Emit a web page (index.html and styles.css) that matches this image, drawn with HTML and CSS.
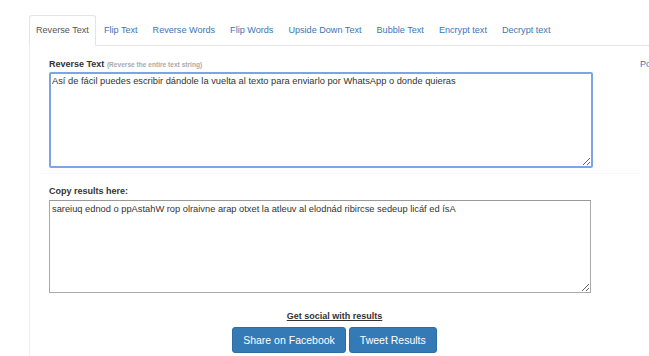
FILE: index.html
```html
<!DOCTYPE html>
<html lang="es">
<head>
  <meta charset="UTF-8">
  <meta name="viewport" content="width=device-width, initial-scale=1.0">
  <title>Reverse Text</title>
  <link rel="stylesheet" href="styles.css">
</head>
<body>
  <div class="page">
    <div class="main">
      <ul class="tabs">
        <li class="tab active"><a href="#">Reverse Text</a></li>
        <li class="tab"><a href="#">Flip Text</a></li>
        <li class="tab"><a href="#">Reverse Words</a></li>
        <li class="tab"><a href="#">Flip Words</a></li>
        <li class="tab"><a href="#">Upside Down Text</a></li>
        <li class="tab"><a href="#">Bubble Text</a></li>
        <li class="tab"><a href="#">Encrypt text</a></li>
        <li class="tab"><a href="#">Decrypt text</a></li>
      </ul>

      <div class="tab-content">
        <div class="form-group">
          <label for="source">Reverse Text <small>(Reverse the entire text string)</small></label>
          <textarea id="source" class="source">Así de fácil puedes escribir dándole la vuelta al texto para enviarlo por WhatsApp o donde quieras</textarea>
        </div>

        <div class="form-group">
          <label for="result">Copy results here:</label>
          <textarea id="result" class="result">sareiuq ednod o ppAstahW rop olraivne arap otxet la atleuv al elodnád ribircse sedeup licáf ed ísA</textarea>
        </div>

        <div class="social">
          <p class="social-title">Get social with results</p>
          <div class="social-buttons">
            <button type="button">Share on Facebook</button>
            <button type="button">Tweet Results</button>
          </div>
        </div>
      </div>
    </div>

    <div class="sidebar">
      <a href="#">Po</a>
    </div>
  </div>
</body>
</html>
```

FILE: styles.css
```css
body {
  margin: 0;
  font-family: "Liberation Sans", Arial, sans-serif;
  color: #333;
  overflow: hidden;
}
.page {
  display: flex;
  padding-top: 15px;
  padding-left: 29px;
}
.main {
  width: 611px;
  flex-shrink: 0;
}
.tabs {
  display: flex;
  list-style: none;
  margin: 0;
  padding: 0;
  height: 30px;
  border-bottom: 1px solid #e4e4e4;
  width: 620px;
}
.tab {
  margin-right: 1px;
}
.tab a {
  display: block;
  height: 30px;
  line-height: 29px;
  padding: 0 6px;
  box-sizing: border-box;
  border: 1px solid transparent;
  border-radius: 3px 3px 0 0;
  font-size: 9.1px;
  color: #3a76b4;
  text-decoration: none;
}
.tab.active a {
  color: #555;
  background-color: #fff;
  border-color: #e4e4e4;
  border-bottom-color: #fff;
  height: 31px;
}
.tab-content {
  border-left: 1px solid #eee;
  padding: 13px 0 0 19px;
  height: 297px;
}
.form-group {
  margin-bottom: 12px;
}
.form-group:first-child {
  padding-bottom: 5px;
  border-bottom: 1px solid #fdf6f6;
  margin-left: -8px;
  padding-left: 8px;
}
label {
  display: block;
  font-size: 9px;
  font-weight: bold;
  color: #333;
  margin-bottom: 3px;
}
.form-group + .form-group label {
  margin-bottom: 4px;
}
label small {
  font-size: 6.6px;
  color: #aaa;
  font-weight: bold;
}
textarea {
  display: block;
  font-family: "Liberation Sans", Arial, sans-serif;
  font-size: 9.3px;
  color: #333;
  padding: 2px 1px;
  box-sizing: border-box;
  resize: both;
  margin: 0;
}
.source {
  width: 544px;
  height: 96px;
  border: 2px solid #7aa6e8;
  border-radius: 2px;
  outline: none;
}
.result {
  width: 542px;
  height: 93px;
  border: 1px solid #aaa;
  border-top-color: #999;
  padding: 3px 2px;
}
.social {
  text-align: center;
  margin-top: 18px;
  margin-left: -20px;
}
.social-title {
  margin: 0 0 6px;
  font-size: 9px;
  font-weight: bold;
  text-decoration: underline;
  color: #333;
}
.social-buttons {
  display: flex;
  justify-content: center;
  gap: 3px;
}
.social-buttons button {
  height: 26px;
  padding: 0 10px;
  border: 1px solid #2e6da4;
  border-radius: 3px;
  background-color: #337ab7;
  color: white;
  font-family: "Liberation Sans", Arial, sans-serif;
  font-size: 10.5px;
  cursor: pointer;
}
.sidebar {
  padding-top: 44px;
  font-size: 9px;
  white-space: nowrap;
}
.sidebar a {
  color: #3a76b4;
  text-decoration: none;
}
```
